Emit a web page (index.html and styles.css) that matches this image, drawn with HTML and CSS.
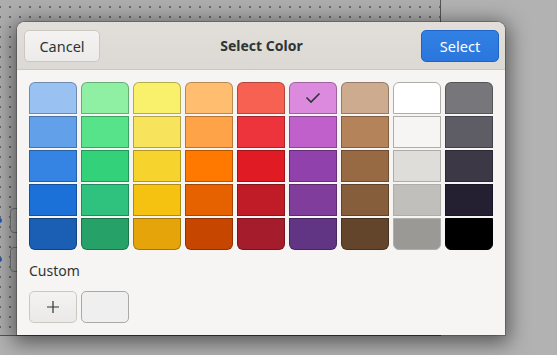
FILE: index.html
```html
<!DOCTYPE html>
<html lang="en">
<head>
  <meta charset="UTF-8">
  <title>Select Color</title>
  <link rel="stylesheet" href="styles.css">
</head>
<body>
  <!-- window behind the dialog -->
  <div class="parent-window">
    <div class="ghost-row row-a"><span class="dot"></span><span class="field"></span></div>
    <div class="ghost-row row-b"><span class="dot"></span><span class="field"></span></div>
  </div>

  <!-- color chooser dialog -->
  <div class="dialog">
    <div class="headerbar">
      <button class="btn">Cancel</button>
      <div class="title">Select Color</div>
      <button class="btn btn-blue">Select</button>
    </div>

    <div class="dialog-body">
      <div class="palette" id="palette"></div>

      <div class="custom-label">Custom</div>
      <div class="custom-row">
        <button class="btn-add">
          <svg width="14" height="14" viewBox="0 0 14 14"><path d="M7 1v12M1 7h12" stroke="#2e3436" stroke-width="1.2" fill="none"/></svg>
        </button>
        <div class="custom-swatch"></div>
      </div>
    </div>
  </div>

  <script>
    // colonnes de la palette GNOME (du clair au foncé)
    const columns = [
      ['#99c1f1', '#62a0ea', '#3584e4', '#1c71d8', '#1a5fb4'],
      ['#8ff0a4', '#57e389', '#33d17a', '#2ec27e', '#26a269'],
      ['#f9f06b', '#f8e45c', '#f6d32d', '#f5c211', '#e5a50a'],
      ['#ffbe6f', '#ffa348', '#ff7800', '#e66100', '#c64600'],
      ['#f66151', '#ed333b', '#e01b24', '#c01c28', '#a51d2d'],
      ['#dc8add', '#c061cb', '#9141ac', '#813d9c', '#613583'],
      ['#cdab8f', '#b5835a', '#986a44', '#865e3c', '#63452c'],
      ['#ffffff', '#f6f5f4', '#deddda', '#c0bfbc', '#9a9996'],
      ['#77767b', '#5e5c64', '#3d3846', '#241f31', '#000000']
    ];

    const palette = document.getElementById('palette');
    columns.forEach((col, ci) => {
      col.forEach((color, ri) => {
        const cell = document.createElement('div');
        cell.className = 'swatch';
        cell.style.background = color;
        if (ci === 7) cell.classList.add('light');
        if (ci === 8 && ri === 4) cell.classList.add('black');
        if (ci === 5 && ri === 0) {
          cell.classList.add('selected');
          cell.innerHTML = '<svg width="16" height="12" viewBox="0 0 16 12"><polyline points="1.5,5.5 6,10 14.5,1.5" fill="none" stroke="#2e3436" stroke-width="1.6"/></svg>';
        }
        palette.appendChild(cell);
      });
    });
  </script>
</body>
</html>
```

FILE: styles.css
```css
* {
  box-sizing: border-box;
}
body {
  margin: 0;
  width: 557px;
  height: 355px;
  overflow: hidden;
  position: relative;
  background-color: #b2b2b2;
  font-family: 'Noto Sans', 'DejaVu Sans', sans-serif;
  color: #2e3436;
}
/* fenêtre derrière */
.parent-window {
  position: absolute;
  left: 0;
  top: 0;
  width: 441px;
  height: 336px;
  background-color: #adadad;
  background-image: radial-gradient(circle, #666 0.7px, transparent 0.9px);
  background-size: 10px 10px;
  background-position: -5px 2px;
  border-right: 1px solid #555;
  border-bottom: 1px solid #555;
}
.ghost-row {
  position: absolute;
  left: -3px;
  display: flex;
  align-items: center;
  gap: 8px;
}
.row-a { top: 208px; }
.row-b { top: 247px; }
.ghost-row .dot {
  width: 5px;
  height: 5px;
  border-radius: 50%;
  background: #2458b0;
}
.ghost-row .field {
  width: 40px;
  height: 25px;
  border: 1px solid #777;
  border-radius: 4px;
}
/* boîte de dialogue */
.dialog {
  position: absolute;
  left: 17px;
  top: 22px;
  width: 488px;
  height: 313px;
  background: #f6f5f4;
  border-radius: 8px 8px 0 0;
  box-shadow: 0 0 0 1px rgba(0,0,0,0.22), 0 4px 20px 4px rgba(0,0,0,0.5);
  overflow: hidden;
}
.headerbar {
  height: 48px;
  display: flex;
  align-items: center;
  justify-content: space-between;
  padding: 0 6px 0 7px;
  background: linear-gradient(#e2dfdb, #dcd9d5);
  border-bottom: 1px solid #cdc7c2;
}
.title {
  font-weight: bold;
  font-size: 14px;
  padding-left: 2px;
}
.btn {
  height: 32px;
  width: 76px;
  font-family: inherit;
  font-size: 14.5px;
  color: #2e3436;
  background: linear-gradient(#f4f3f1, #edebe9);
  border: 1px solid #cdc7c2;
  border-radius: 5px;
  margin-top: 1px;
}
.btn-blue {
  width: 78px;
  color: #fff;
  background: linear-gradient(#3281e4, #2a76dd);
  border-color: #1d64c4;
}
.dialog-body {
  padding: 12px;
}
.palette {
  display: grid;
  grid-template-rows: repeat(5, 32px);
  grid-auto-columns: 48px;
  grid-auto-flow: column;
  column-gap: 4px;
  row-gap: 2px;
}
.swatch {
  border: 1px solid rgba(0,0,0,0.28);
  display: flex;
  align-items: center;
  justify-content: center;
}
.swatch.light {
  border-color: #aeadaa;
}
.swatch.black {
  border-color: #000;
}
.swatch:nth-child(5n+1) {
  border-radius: 6px 6px 0 0;
}
.swatch:nth-child(5n) {
  border-radius: 0 0 6px 6px;
}
.custom-label {
  margin-top: 12px;
  height: 18px;
  line-height: 18px;
  font-size: 14px;
}
.custom-row {
  margin-top: 11px;
  display: flex;
  gap: 4px;
}
.btn-add {
  width: 48px;
  height: 32px;
  display: flex;
  align-items: center;
  justify-content: center;
  background: linear-gradient(#f4f3f1, #ebe9e7);
  border: 1px solid #cdc7c2;
  border-radius: 5px;
  padding: 0;
}
.custom-swatch {
  width: 48px;
  height: 32px;
  background: #efefef;
  border: 1px solid #a9a9a9;
  border-radius: 5px;
}
```
